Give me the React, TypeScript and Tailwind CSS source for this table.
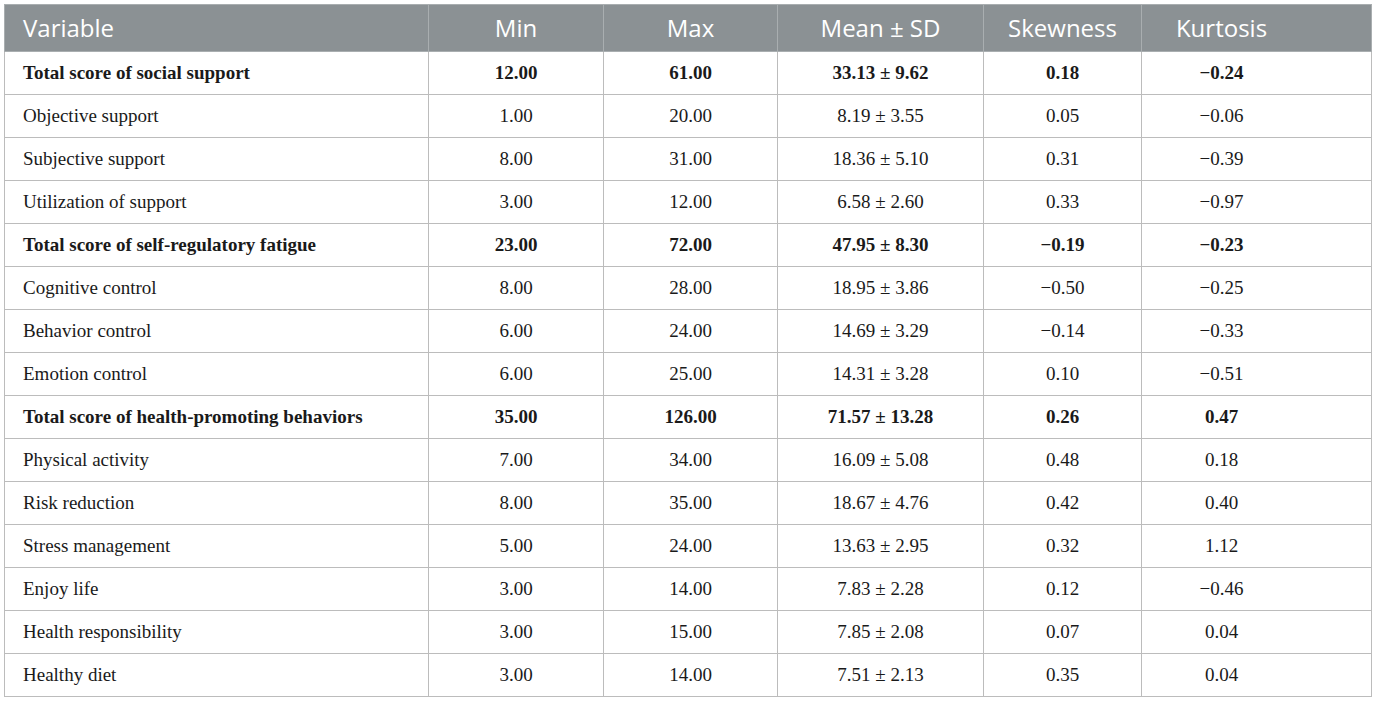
const rows: { name: string; min: string; max: string; mean: string; skew: string; kurt: string; total?: boolean }[] = [
  { name: "Total score of social support", min: "12.00", max: "61.00", mean: "33.13 ± 9.62", skew: "0.18", kurt: "−0.24", total: true },
  { name: "Objective support", min: "1.00", max: "20.00", mean: "8.19 ± 3.55", skew: "0.05", kurt: "−0.06" },
  { name: "Subjective support", min: "8.00", max: "31.00", mean: "18.36 ± 5.10", skew: "0.31", kurt: "−0.39" },
  { name: "Utilization of support", min: "3.00", max: "12.00", mean: "6.58 ± 2.60", skew: "0.33", kurt: "−0.97" },
  { name: "Total score of self-regulatory fatigue", min: "23.00", max: "72.00", mean: "47.95 ± 8.30", skew: "−0.19", kurt: "−0.23", total: true },
  { name: "Cognitive control", min: "8.00", max: "28.00", mean: "18.95 ± 3.86", skew: "−0.50", kurt: "−0.25" },
  { name: "Behavior control", min: "6.00", max: "24.00", mean: "14.69 ± 3.29", skew: "−0.14", kurt: "−0.33" },
  { name: "Emotion control", min: "6.00", max: "25.00", mean: "14.31 ± 3.28", skew: "0.10", kurt: "−0.51" },
  { name: "Total score of health-promoting behaviors", min: "35.00", max: "126.00", mean: "71.57 ± 13.28", skew: "0.26", kurt: "0.47", total: true },
  { name: "Physical activity", min: "7.00", max: "34.00", mean: "16.09 ± 5.08", skew: "0.48", kurt: "0.18" },
  { name: "Risk reduction", min: "8.00", max: "35.00", mean: "18.67 ± 4.76", skew: "0.42", kurt: "0.40" },
  { name: "Stress management", min: "5.00", max: "24.00", mean: "13.63 ± 2.95", skew: "0.32", kurt: "1.12" },
  { name: "Enjoy life", min: "3.00", max: "14.00", mean: "7.83 ± 2.28", skew: "0.12", kurt: "−0.46" },
  { name: "Health responsibility", min: "3.00", max: "15.00", mean: "7.85 ± 2.08", skew: "0.07", kurt: "0.04" },
  { name: "Healthy diet", min: "3.00", max: "14.00", mean: "7.51 ± 2.13", skew: "0.35", kurt: "0.04" },
];

const th = "h-[47px] border border-[#a9aeb0] bg-[#8b9194] text-center text-[24px] font-normal text-white";
const td = "h-[43px] border border-[#bcbcbc] text-center";

export default function App() {
  return (
    <div className="min-h-[701px] w-[1375px] bg-white p-1">
      <table
        className="w-[1367px] table-fixed border-collapse border border-[#c4c8c8] text-[#1a1a1a]"
        style={{ fontFamily: '"Liberation Serif", serif' }}
      >
        <colgroup>
          <col className="w-[424px]" />
          <col className="w-[175px]" />
          <col className="w-[174px]" />
          <col className="w-[206px]" />
          <col className="w-[158px]" />
          <col className="w-[230px]" />
        </colgroup>
        <thead style={{ fontFamily: '"Open Sans", sans-serif' }}>
          <tr>
            <th className={`${th} pl-[18px] !text-left`}>Variable</th>
            <th className={th}>Min</th>
            <th className={th}>Max</th>
            <th className={th}>Mean ± SD</th>
            <th className={th}>Skewness</th>
            <th className={`${th} pr-[70px]`}>Kurtosis</th>
          </tr>
        </thead>
        <tbody className="text-[19px]">
          {rows.map((r) => (
            <tr key={r.name} className={r.total ? "font-bold" : ""}>
              <td className={`${td} pl-[18px] !text-left`}>{r.name}</td>
              <td className={td}>{r.min}</td>
              <td className={td}>{r.max}</td>
              <td className={td}>{r.mean}</td>
              <td className={td}>{r.skew}</td>
              <td className={`${td} pr-[70px]`}>{r.kurt}</td>
            </tr>
          ))}
        </tbody>
      </table>
    </div>
  );
}
